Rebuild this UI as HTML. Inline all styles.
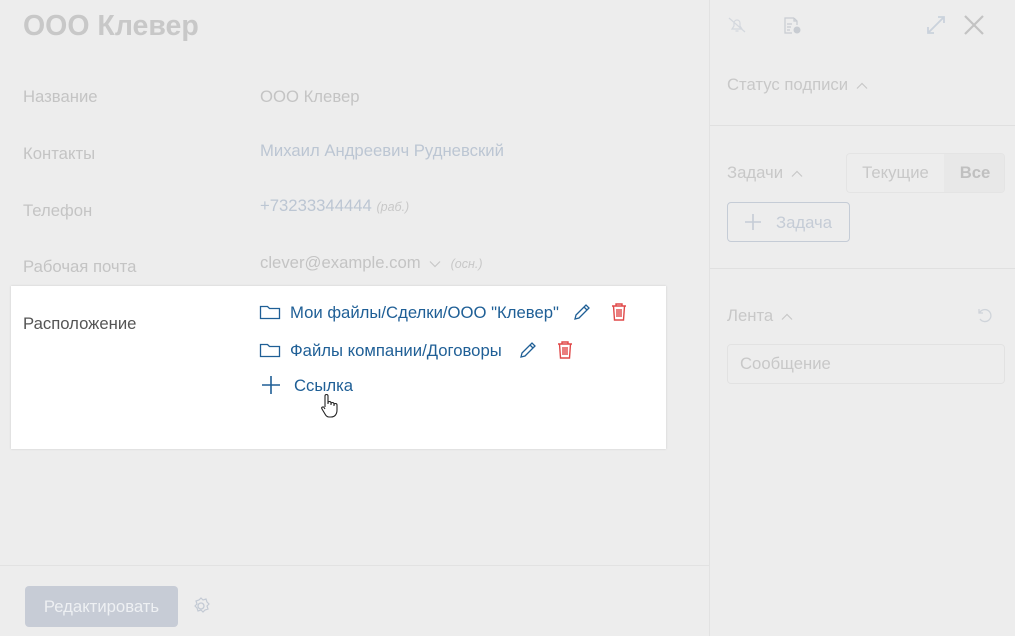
<!DOCTYPE html>
<html><head><meta charset="utf-8"><style>
*{margin:0;padding:0;box-sizing:border-box}
body{width:1015px;height:636px;background:#ededed;font-family:"Liberation Sans",sans-serif;position:relative;overflow:hidden}
.a{position:absolute;white-space:nowrap}
.lab{color:#c4c4c4;font-size:16.7px}
.val{color:#c4c4c4;font-size:16.7px}
.blue{color:#bcc6d3}
.it{font-style:italic;font-size:12.5px;color:#c8c8c8}
.lnk{color:#1f5f96;font-size:16.7px}
.ch{display:inline-block;vertical-align:middle;margin-left:4px}
.cu{display:inline-block;vertical-align:middle;margin-left:8px}
</style></head><body>
<div class="a" style="left:23px;top:10px;font-size:28.5px;font-weight:bold;color:#c8c8c8">ООО Клевер</div>
<div class="a lab" style="left:23px;top:87px">Название</div>
<div class="a val" style="left:260px;top:87px">ООО Клевер</div>
<div class="a lab" style="left:23px;top:144px">Контакты</div>
<div class="a val blue" style="left:260px;top:141px">Михаил Андреевич Рудневский</div>
<div class="a lab" style="left:23px;top:201px">Телефон</div>
<div class="a val blue" style="left:260px;top:196px">+73233344444 <span class="it">(раб.)</span></div>
<div class="a lab" style="left:23px;top:257px">Рабочая почта</div>
<div class="a val" style="left:260px;top:253px">clever@example.com <svg class="ch" width="12" height="8" viewBox="0 0 12 8"><path d="M1 1.5l5 5 5-5" fill="none" stroke="#c8c8c8" stroke-width="1.2"/></svg> &nbsp;<span class="it">(осн.)</span></div>

<div class="a" style="left:11px;top:286px;width:655px;height:163px;background:#fff;box-shadow:0 0 2px rgba(0,0,0,.15)"></div>
<div class="a" style="left:23px;top:314px;font-size:16.7px;color:#555">Расположение</div>
<svg class="a" style="left:259px;top:303px" width="22" height="18" viewBox="0 0 22 18"><path d="M1.5 3.5h7l2 2h10v10h-19z" fill="none" stroke="#1f5f96" stroke-width="1.3"/></svg>
<div class="a lnk" style="left:290px;top:303px">Мои файлы/Сделки/ООО "Клевер"</div>
<svg class="a" style="left:572px;top:302px" width="20" height="20" viewBox="0 0 20 20"><path d="M3 17l1-4L14 3l3 3L7 16z M12 5l3 3" fill="none" stroke="#1f5f96" stroke-width="1.3"/></svg>
<svg class="a" style="left:610px;top:302px" width="18" height="20" viewBox="0 0 18 20"><path d="M2 4h14M6 4V2h6v2M3.5 4l1 14h9l1-14M7 7v8M9 7v8M11 7v8" fill="none" stroke="#e04848" stroke-width="1.4"/></svg>
<svg class="a" style="left:259px;top:341px" width="22" height="18" viewBox="0 0 22 18"><path d="M1.5 3.5h7l2 2h10v10h-19z" fill="none" stroke="#1f5f96" stroke-width="1.3"/></svg>
<div class="a lnk" style="left:290px;top:341px">Файлы компании/Договоры</div>
<svg class="a" style="left:518px;top:340px" width="20" height="20" viewBox="0 0 20 20"><path d="M3 17l1-4L14 3l3 3L7 16z M12 5l3 3" fill="none" stroke="#1f5f96" stroke-width="1.3"/></svg>
<svg class="a" style="left:556px;top:340px" width="18" height="20" viewBox="0 0 18 20"><path d="M2 4h14M6 4V2h6v2M3.5 4l1 14h9l1-14M7 7v8M9 7v8M11 7v8" fill="none" stroke="#e04848" stroke-width="1.4"/></svg>
<svg class="a" style="left:261px;top:375px" width="20" height="20" viewBox="0 0 20 20"><path d="M10 1v18M1 10h18" stroke="#1f5f96" stroke-width="1.6"/></svg>
<div class="a lnk" style="left:294px;top:376px">Ссылка</div>
<svg class="a" style="left:320px;top:393px" width="20" height="26" viewBox="0 0 20 26"><path d="M5 14V3a1.5 1.5 0 013 0v8 M8 10a1.5 1.5 0 013 0v2 M11 11a1.5 1.5 0 013 0v2 M14 12a1.5 1.5 0 013 0v5c0 4-2 7-6 7H9c-2 0-3-1-4-3l-3-5c-1-1.5 1-3 2-1.5L5 16" fill="#fff" stroke="#222" stroke-width="1.1"/></svg>

<div class="a" style="left:0;top:565px;width:709px;height:1px;background:#e2e2e2"></div>
<div class="a" style="left:25px;top:586px;width:153px;height:41px;background:#c7ccd6;border-radius:4px;color:#eef0f3;font-size:16.7px;text-align:center;line-height:41px">Редактировать</div>
<svg class="a" style="left:191px;top:596px" width="20" height="20" viewBox="0 0 20 20"><circle cx="10" cy="10" r="3" fill="none" stroke="#c3cad4" stroke-width="1.3"/><path d="M10 2l2 2 3-1 1 3 2 2-2 2 1 3-3 1-2 2-2-2-3 1-1-3-2-2 2-2-1-3 3-1z" fill="none" stroke="#c3cad4" stroke-width="1.2"/></svg>

<div class="a" style="left:709px;top:0;width:1px;height:636px;background:#e2e2e2"></div>
<svg class="a" style="left:727px;top:15px" width="20" height="20" viewBox="0 0 20 20"><path d="M5 14h10l-2-3V8a3 3 0 00-6 0v3zM8.5 16h3M2 3l16 14" fill="none" stroke="#d4d8de" stroke-width="1.2"/></svg>
<svg class="a" style="left:782px;top:15px" width="20" height="20" viewBox="0 0 20 20"><path d="M12 3H3v15h7M12 3l3 3v4M12 3v3h3M5 9h5M5 12h4M5 15h3" fill="none" stroke="#c8ccd2" stroke-width="1.2"/><circle cx="15" cy="15" r="3.5" fill="#c8ccd2"/></svg>
<svg class="a" style="left:925px;top:14px" width="22" height="22" viewBox="0 0 22 22"><path d="M3 19L19 3M13 3h6v6M3 13v6h6" fill="none" stroke="#cad2dc" stroke-width="1.8"/></svg>
<svg class="a" style="left:963px;top:14px" width="22" height="22" viewBox="0 0 22 22"><path d="M2 2l18 18M20 2L2 20" stroke="#c3c3c3" stroke-width="2.2"/></svg>

<div class="a" style="left:727px;top:75px;font-size:16.7px;color:#c8c8c8">Статус подписи<svg class="cu" width="12" height="8" viewBox="0 0 12 8"><path d="M1 6.5l5-5 5 5" fill="none" stroke="#c8c8c8" stroke-width="1.2"/></svg></div>
<div class="a" style="left:710px;top:125px;width:305px;height:1px;background:#e0e0e0"></div>
<div class="a" style="left:727px;top:163px;font-size:16.7px;color:#c8c8c8">Задачи<svg class="cu" width="12" height="8" viewBox="0 0 12 8"><path d="M1 6.5l5-5 5 5" fill="none" stroke="#c8c8c8" stroke-width="1.2"/></svg></div>
<div class="a" style="left:846px;top:153px;width:159px;height:40px;border:1px solid #e4e4e4;border-radius:4px;overflow:hidden">
<div class="a" style="left:0;top:0;width:97px;height:38px;line-height:38px;text-align:center;color:#c8c8c8;font-size:16.7px">Текущие</div>
<div class="a" style="left:97px;top:0;width:62px;height:38px;line-height:38px;text-align:center;color:#c0c0c0;font-size:16.7px;font-weight:bold;background:#e8e8e8">Все</div>
</div>
<div class="a" style="left:727px;top:202px;width:123px;height:40px;border:1px solid #c5ccd6;border-radius:4px"></div>
<svg class="a" style="left:745px;top:214px" width="16" height="16" viewBox="0 0 16 16"><path d="M8 0v16M0 8h16" stroke="#c5ccd6" stroke-width="1.6"/></svg>
<div class="a" style="left:776px;top:213px;font-size:16.7px;color:#c5ccd6">Задача</div>
<div class="a" style="left:710px;top:268px;width:305px;height:1px;background:#e0e0e0"></div>
<div class="a" style="left:727px;top:306px;font-size:16.7px;color:#c8c8c8">Лента<svg class="cu" width="12" height="8" viewBox="0 0 12 8"><path d="M1 6.5l5-5 5 5" fill="none" stroke="#c8c8c8" stroke-width="1.2"/></svg></div>
<svg class="a" style="left:975px;top:305px" width="20" height="20" viewBox="0 0 20 20"><path d="M4 4v4h4M4.5 8A6 6 0 1 1 5 14" fill="none" stroke="#cfd4da" stroke-width="1.3"/></svg>
<div class="a" style="left:727px;top:344px;width:278px;height:40px;border:1px solid #e2e2e2;border-radius:4px;padding-left:12px;line-height:38px;font-size:16.7px;color:#c8c8c8">Сообщение</div>
</body></html>
